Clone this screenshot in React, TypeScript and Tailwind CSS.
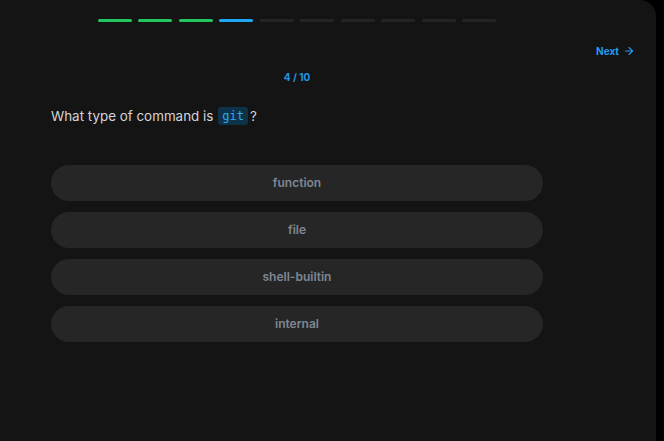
import { ArrowRight } from "lucide-react";

const steps = ["done", "done", "done", "current", "todo", "todo", "todo", "todo", "todo", "todo"];
const options = ["function", "file", "shell-builtin", "internal"];

function App() {
  return (
    <div className="w-[664px] h-[441px] bg-black flex font-['Inter',sans-serif]">
      <div className="w-[656px] h-full bg-[#141414] rounded-tr-[16px] flex flex-col">
        <div className="mt-[19px] ml-[98px] w-[398px] flex gap-[6.5px]">
          {steps.map((s, i) => (
            <div
              key={i}
              className={
                s === "done"
                  ? "flex-1 h-[3px] rounded-full bg-[#22c55e]"
                  : s === "current"
                  ? "flex-1 h-[3px] rounded-full bg-[#1ea7f5]"
                  : "flex-1 h-[3px] rounded-full bg-[#242424]"
              }
            />
          ))}
        </div>

        <div className="mt-[22px] h-[14px] flex justify-end pr-[21px]">
          <button className="flex items-center gap-[4px] text-[10px] font-bold text-[#1e9cf0] leading-[14px]">
            Next
            <ArrowRight size={12} strokeWidth={2.2} />
          </button>
        </div>

        <div className="ml-[51px] w-[492px] flex flex-col">
          <div className="mt-[12px] h-[14px] text-center text-[10px] font-bold leading-[14px] text-[#1e96e6]">
            4 / 10
          </div>

          <div className="mt-[22px] h-[20px] text-[13.4px] leading-[20px] text-[#d4d4d8] flex items-center">
            <span>What type of command is</span>
            <code className="ml-[5px] px-[4px] h-[18px] flex items-center rounded-[3px] bg-[#0e3349] text-[#2ea8ef] text-[12px] font-['DejaVu_Sans_Mono',monospace]">
              git
            </code>
            <span className="ml-[2px]">?</span>
          </div>

          <div className="mt-[39px] flex flex-col gap-[11px]">
            {options.map((o) => (
              <button
                key={o}
                className="h-[36px] w-full rounded-full bg-[#262626] text-[12px] font-semibold text-[#7f8693] flex items-center justify-center"
              >
                {o}
              </button>
            ))}
          </div>
        </div>
      </div>
    </div>
  );
}

export default App;
